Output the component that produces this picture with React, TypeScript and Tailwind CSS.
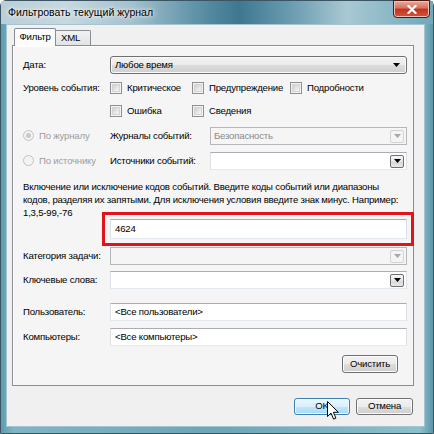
import type { ReactNode } from "react";

// Small black triangle used by every drop-down
function Caret({ dim }: { dim?: boolean }) {
  return (
    <svg width="7" height="4" viewBox="0 0 7 4">
      <path d="M0 0h7L3.5 4z" fill={dim ? "#a8a8a8" : "#000"} />
    </svg>
  );
}

function Check({ label }: { label: string }) {
  return (
    <div className="flex items-center gap-[5px]">
      <span className="w-[12px] h-[12px] border border-[#8e8f8f] bg-[#f4f4f4] p-[1px]">
        <span className="block w-full h-full border border-[#d4d4d4] bg-[linear-gradient(135deg,#cfcfcf,#f7f7f7)]" />
      </span>
      <span>{label}</span>
    </div>
  );
}

function Radio({ label, on }: { label: string; on?: boolean }) {
  return (
    <div className="flex items-center gap-[5px] text-[#9d9d9d] w-[87px]">
      <span className="w-[11px] h-[11px] rounded-full border border-[#c2c2c2] bg-[#f3f3f3] flex items-center justify-center">
        {on && <span className="w-[5px] h-[5px] rounded-full bg-[#c9c9c9]" />}
      </span>
      <span>{label}</span>
    </div>
  );
}

// Editable combobox with a drop button on the right
function Combo({ value, disabled }: { value?: string; disabled?: boolean }) {
  return (
    <div
      className={`flex-1 h-[18px] flex items-center pl-[3px] pr-[2px] border ${
        disabled
          ? "border-[#b5b8bb] bg-[#f5f5f5] text-[#8a8a8a]"
          : "border-[#abadb3] border-b-[#e3e9ef] border-x-[#dbdfe6] bg-white"
      }`}
    >
      <span className="flex-1 leading-none">{value}</span>
      <span
        className={`w-[14px] h-[13px] rounded-[2px] border flex items-center justify-center ${
          disabled
            ? "border-[#d2d2d2] bg-[#f4f4f4]"
            : "border-[#707070] bg-[linear-gradient(#f6f6f6,#e6e6e6_50%,#d6d6d6_51%,#e8e8e8)]"
        }`}
      >
        <Caret dim={disabled} />
      </span>
    </div>
  );
}

function TextBox({ value, h = "h-[18px]" }: { value: string; h?: string }) {
  return (
    <div
      className={`flex-1 ${h} flex items-center pl-[4px] bg-white border border-[#abadb3] border-b-[#e3e9ef] border-x-[#dbdfe6]`}
    >
      {value}
    </div>
  );
}

function Row({ label, children, className = "" }: { label: ReactNode; children: ReactNode; className?: string }) {
  return (
    <div className={`flex items-center ${className}`}>
      <div className="w-[87px] shrink-0">{label}</div>
      {children}
    </div>
  );
}

function Button({ children, hot, className = "" }: { children: ReactNode; hot?: boolean; className?: string }) {
  return (
    <div
      className={`h-[17px] rounded-[3px] border flex items-center justify-center ${
        hot
          ? "border-[#3c7fb1] bg-[linear-gradient(#eaf6fd,#d9f0fc_50%,#bee6fd_51%,#a7d9f5)] shadow-[inset_0_0_0_1px_#f4fbff]"
          : "border-[#707070] bg-[linear-gradient(#f2f2f2,#ebebeb_50%,#dddddd_51%,#cfcfcf)] shadow-[inset_0_0_0_1px_#fbfbfb]"
      } ${className}`}
    >
      {children}
    </div>
  );
}

export default function App() {
  return (
    <div className="w-[434px] h-[434px] relative overflow-hidden font-['Segoe_UI','Liberation_Sans',sans-serif] text-[9.6px] tracking-[-0.2px] text-black">
      <div className="flex flex-col h-full rounded-t-[6px] border border-[#3b5563] bg-[linear-gradient(90deg,#5e9cb0,#7fb6c6_3%,#6aa6b8_50%,#8cc0cd_97%,#5a97ab)]">
        {/* title bar */}
        <div className="h-[23px] shrink-0 flex items-center pl-[7px] relative bg-[linear-gradient(90deg,#b9ced7,#c6d8df_15%,#a5c2ce_30%,#5f93a8_45%,#3d7790_55%,#6e9fb2_68%,#a9c8d3_80%,#86b5c4_92%,#6ea9bb)]">
          <span className="text-[10.5px] tracking-normal [text-shadow:0_0_6px_#ffffff,0_0_3px_#ffffff]">Фильтровать текущий журнал</span>
          <div className="absolute right-[3px] top-[-1px] w-[37px] h-[18px] rounded-b-[4px] border border-[#4a1a14] bg-[linear-gradient(#e9a99b,#d6705e_45%,#c2321f_50%,#d2533c)] flex items-center justify-center shadow-[inset_0_0_0_1px_#f2c0b4]">
            <svg width="10" height="9" viewBox="0 0 10 9">
              <path d="M1.5 1l7 7M8.5 1l-7 7" stroke="#fff" strokeWidth="2.2" strokeLinecap="square" />
            </svg>
          </div>
        </div>

        {/* client area */}
        <div className="flex-1 ml-[5px] mr-[8px] mb-[6px] border border-[#a4c4cf] bg-[#f0f0f0] flex flex-col pl-[5px] pr-[10px] pt-[3px]">
          {/* tabs */}
          <div className="flex items-end h-[18px] pl-[2px] relative z-10">
            <div className="h-[18px] w-[42px] border border-b-0 border-[#898c95] rounded-t-[2px] bg-[#fcfcfc] flex items-center justify-center">
              Фильтр
            </div>
            <div className="h-[15px] w-[35px] border border-l-0 border-b-0 border-[#898c95] rounded-tr-[2px] bg-[linear-gradient(#f2f2f2,#e3e3e3)] flex items-center pl-[5px] mb-[1px]">
              XML
            </div>
          </div>

          {/* tab panel */}
          <div className="-mt-[1px] border border-[#898c95] bg-[#f5f5f5] shadow-[inset_1px_1px_0_#ffffff] pl-[10px] pr-[6px] pb-[12px] flex flex-col">
            <Row label="Дата:" className="mt-[10px]">
              <div className="flex-1 h-[18px] rounded-[3px] border border-[#707070] bg-[linear-gradient(#f2f2f2,#ebebeb_50%,#dddddd_51%,#cfcfcf)] shadow-[inset_0_0_0_1px_#fafafa] flex items-center pl-[4px] pr-[6px]">
                <span className="flex-1">Любое время</span>
                <Caret />
              </div>
            </Row>

            <div className="flex mt-[7px]">
              <div className="w-[87px] shrink-0 h-[14px] flex items-center">Уровень события:</div>
              <div className="grid grid-cols-[82px_98px_auto] gap-y-[9px]">
                <div className="h-[14px] flex items-center"><Check label="Критическое" /></div>
                <div className="h-[14px] flex items-center"><Check label="Предупреждение" /></div>
                <div className="h-[14px] flex items-center"><Check label="Подробности" /></div>
                <div className="h-[14px] flex items-center"><Check label="Ошибка" /></div>
                <div className="h-[14px] flex items-center"><Check label="Сведения" /></div>
              </div>
            </div>

            <div className="flex items-center mt-[9px]">
              <Radio label="По журналу" on />
              <div className="w-[100px] shrink-0">Журналы событий:</div>
              <Combo value="Безопасность" disabled />
            </div>
            <div className="flex items-center mt-[7px]">
              <Radio label="По источнику" />
              <div className="w-[100px] shrink-0">Источники событий:</div>
              <Combo />
            </div>

            <p className="mt-[10px] leading-[13px] whitespace-nowrap">
              Включение или исключение кодов событий. Введите коды событий или диапазоны
              <br />
              кодов, разделяя их запятыми. Для исключения условия введите знак минус. Например:
              <br />
              1,3,5-99,-76
            </p>

            <div className="flex pl-[87px]">
              <div className="flex-1 relative">
                <TextBox value="4624" h="h-[20px]" />
                {/* highlight frame */}
                <div className="absolute -left-[8px] -right-[7px] -top-[7px] -bottom-[7px] border-[3px] border-[#e1141c]" />
              </div>
            </div>

            <Row label="Категория задачи:" className="mt-[8px]">
              <Combo disabled />
            </Row>
            <Row label="Ключевые слова:" className="mt-[6px]">
              <Combo />
            </Row>
            <Row label="Пользователь:" className="mt-[14px]">
              <TextBox value="<Все пользователи>" />
            </Row>
            <Row label="Компьютеры:" className="mt-[7px]">
              <TextBox value="<Все компьютеры>" />
            </Row>

            <div className="flex justify-end mt-[9px] pr-[9px]">
              <Button className="w-[56px] h-[18px]">Очистить</Button>
            </div>
          </div>

          {/* dialog buttons */}
          <div className="flex justify-end gap-[6px] mt-[12px] mr-[1px] relative">
            <Button hot className="w-[56px]">OK</Button>
            <Button className="w-[57px]">Отмена</Button>
            {/* mouse pointer */}
            <svg className="absolute left-[315px] top-[3px]" width="12" height="19" viewBox="0 0 12 19">
              <path d="M0.5 0.5v15l3.5-3.4 2.6 6 2.3-1-2.5-5.8h5z" fill="#fff" stroke="#000" strokeWidth="1" strokeLinejoin="round" />
            </svg>
          </div>
        </div>
      </div>
    </div>
  );
}
